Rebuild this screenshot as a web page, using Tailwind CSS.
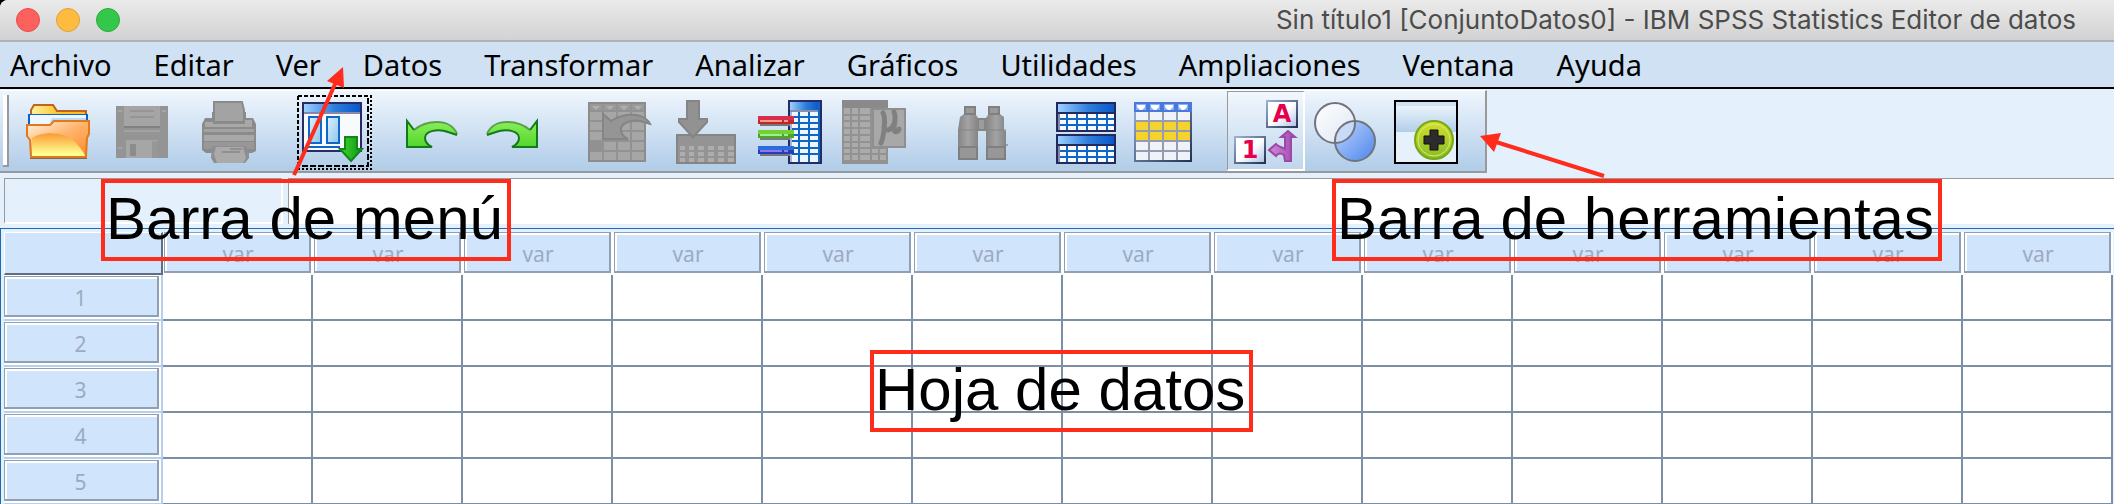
<!DOCTYPE html>
<html lang="es">
<head>
<meta charset="utf-8">
<title>Sin título1 [ConjuntoDatos0] - IBM SPSS Statistics Editor de datos</title>
<script src="https://cdn.jsdelivr.net/npm/@tailwindcss/browser@4"></script>
</head>
<body class="bg-black font-['Noto_Sans',sans-serif]">
<div class="relative flex h-screen flex-col overflow-hidden rounded-tl-lg bg-[#e4f0fc]">

  <header class="flex h-[42px] shrink-0 items-center border-b-2 border-[#b2b2b2] bg-linear-to-b from-[#ebebeb] to-[#d2d2d2] pr-[38px] pl-4">
    <div class="flex gap-4">
      <button aria-label="Cerrar" class="size-6 rounded-full border border-[#e2504c] bg-[#fc615d]"></button>
      <button aria-label="Minimizar" class="size-6 rounded-full border border-[#dfa03a] bg-[#fdbc40]"></button>
      <button aria-label="Ampliar" class="size-6 rounded-full border border-[#2ba93f] bg-[#34c84a]"></button>
    </div>
    <h1 class="ml-auto font-['Inter',sans-serif] text-[26px] leading-8 whitespace-nowrap text-[#4c4c4c]">Sin título1 [ConjuntoDatos0] - IBM SPSS Statistics Editor de datos</h1>
  </header>

  <nav aria-label="Menú" class="flex h-[47px] shrink-0 items-center gap-[42px] border-b-2 border-black bg-[#cfe1f3] pl-[10px] text-[29px] leading-9 text-black">
    <button>Archivo</button>
    <button>Editar</button>
    <button>Ver</button>
    <button>Datos</button>
    <button>Transformar</button>
    <button>Analizar</button>
    <button>Gráficos</button>
    <button>Utilidades</button>
    <button>Ampliaciones</button>
    <button>Ventana</button>
    <button>Ayuda</button>
  </nav>

  <div role="toolbar" aria-label="Barra de herramientas" class="mt-px flex h-[83px] shrink-0 items-center gap-6 self-start border-t border-r-2 border-b-2 border-t-white border-r-[#999] border-b-[#999] bg-linear-to-b from-[#eff6fd] to-[#b0cce8] pr-5 pl-[3px]">
    <div class="-mr-6 h-[72px] w-[6px] border-r-2 border-b-2 border-[#999] bg-white"></div>
    <div class="ml-[10px] flex gap-2">
      <button aria-label="Abrir" class="flex h-[78px] w-[78px] items-center justify-center">
        <svg class="size-[72px] overflow-visible" viewBox="22 95 72 72">
          <defs>
            <linearGradient id="fy" x1="0" y1="0" x2="0" y2="1"><stop offset="0" stop-color="#fb9a34"/><stop offset=".9" stop-color="#ffff90"/></linearGradient>
            <linearGradient id="fb" x1="0" y1="0" x2="1" y2="0"><stop offset="0" stop-color="#fff3a0"/><stop offset=".5" stop-color="#fdc32c"/><stop offset="1" stop-color="#fbb52c"/></linearGradient>
            <linearGradient id="fr" x1="0" y1="0" x2="1" y2="1"><stop offset="0" stop-color="#fff4e4"/><stop offset=".5" stop-color="#ffb36a"/><stop offset="1" stop-color="#fb8a28"/></linearGradient>
          </defs>
          <rect x="30" y="157" width="57" height="2" fill="#7d6a50"/>
          <path d="M31 130V110L34 105H53L57 111H86V130Z" fill="url(#fb)" stroke="#bf6420" stroke-width="2"/>
          <rect x="28" y="114" width="60" height="14" fill="#0a62d0"/>
          <path d="M30 115H86V128H30Z" fill="#eef7fe"/><path d="M52 118H86V122H50Z" fill="#b4dcf8"/>
          <path d="M27 125H50L54 121H89V134L87 138L86 157H31L30 140L27 136Z" fill="url(#fr)" stroke="#e07a1c" stroke-width="2"/>
          <path d="M32 138C42 131 66 131 76 143C80 148 84 152 85 156H32Z" fill="url(#fy)"/>
        </svg>
      </button>
      <button aria-label="Guardar" class="flex h-[78px] w-[78px] items-center justify-center">
        <svg class="size-[72px] overflow-visible" viewBox="108 95 72 72">
          <rect x="116" y="106" width="52" height="52" fill="#949494"/>
          <rect x="124" y="106" width="36" height="20" fill="#a5a5a5"/>
          <path d="M130 111H154M130 117H154" stroke="#959595" stroke-width="2"/>
          <path d="M118 111H122M162 111H166M118 148H122" stroke="#a5a5a5" stroke-width="2"/>
          <path d="M124 127H160" stroke="#828282" stroke-width="2"/><path d="M124 131H160" stroke="#a2a2a2" stroke-width="2"/>
          <rect x="126" y="140" width="32" height="18" fill="#a6a6a6"/><rect x="152" y="141" width="6" height="17" fill="#979797"/>
          <rect x="130" y="144" width="6" height="12" fill="#8c8c8c"/>
        </svg>
      </button>
      <button aria-label="Imprimir" class="flex h-[78px] w-[78px] items-center justify-center">
        <svg class="size-[72px] overflow-visible" viewBox="194 95 72 72">
          <path d="M202 124L205 118H212V112H246V118H253L256 124V151L252 153H206L202 150Z" fill="#8b8b8b"/>
          <path d="M214 102H242L244 110V122H214Z" fill="#a3a3a3" stroke="#8a8a8a" stroke-width="2"/>
          <path d="M205 122H213V124H245V120H252V127H205Z" fill="#a8a8a8"/>
          <rect x="204" y="129" width="50" height="3" fill="#a3a3a3"/>
          <rect x="204" y="135" width="50" height="6" fill="#a8a8a8"/>
          <path d="M204 142H254V149H204Z" fill="#989898"/>
          <path d="M212 146H246L249 153V158L245 163H214L211 158Z" fill="#8e8e8e"/>
          <path d="M216 147H243L246 158L243 163H217L214 154Z" fill="#aaa"/>
          <path d="M230 149H242M222 152H240" stroke="#8f8f8f" stroke-width="2"/>
        </svg>
      </button>
    </div>
    <button aria-label="Recuperar cuadros de diálogo" class="flex h-[78px] w-[78px] items-center justify-center">
      <svg class="size-[72px] overflow-visible" viewBox="296 95 72 72">
        <defs>
          <linearGradient id="tb" x1="0" y1="0" x2="1" y2="0"><stop offset="0" stop-color="#9ccfff"/><stop offset=".55" stop-color="#2d7ddb"/><stop offset="1" stop-color="#0a58c8"/></linearGradient>
          <linearGradient id="pn" x1="0" y1="0" x2="1" y2="1"><stop offset="0" stop-color="#dff1fc"/><stop offset="1" stop-color="#8cc4ec"/></linearGradient>
          <linearGradient id="gr" x1="0" y1="0" x2="1" y2="0"><stop offset="0" stop-color="#3ed62c"/><stop offset="1" stop-color="#12961a"/></linearGradient>
        </defs>
        <g fill="none" stroke="#000" stroke-width="2">
          <path d="M298 96H372M298 96V168" stroke-dasharray="4 2"/>
          <path d="M368 98V166H298" stroke-dasharray="6 2"/>
          <path d="M371 96V169H298" stroke-dasharray="2 2"/>
        </g>
        <rect x="303" y="103" width="58" height="48" fill="#f7fbfd" stroke="#272c66" stroke-width="2"/>
        <rect x="304" y="104" width="56" height="8" fill="url(#tb)"/>
        <path d="M304 113H360" stroke="#8a86a8" stroke-width="2"/>
        <rect x="309" y="117" width="12" height="26" fill="url(#pn)" stroke="#0f66cc" stroke-width="2"/>
        <rect x="327" y="117" width="12" height="26" fill="url(#pn)" stroke="#0f66cc" stroke-width="2"/>
        <path d="M308 147H340" stroke="#0f66cc" stroke-width="2"/>
        <path d="M345 137H357V149H362L351 161L340 149H345Z" fill="url(#gr)" stroke="#12861a" stroke-width="2"/>
      </svg>
    </button>
    <div class="flex gap-[2px]">
      <button aria-label="Deshacer" class="flex h-[78px] w-[78px] items-center justify-center">
        <svg class="size-[72px] overflow-visible" viewBox="398 95 72 72">
          <defs><linearGradient id="un" x1="0" y1="0" x2="0" y2="1"><stop offset="0" stop-color="#8aee5a"/><stop offset="1" stop-color="#52d62e"/></linearGradient></defs>
          <path d="M407 121L414 130C424 122 444 119 452 127L457 134L448 132C438 128 425 131 425 138C425 142 428 145 432 147H407Z" fill="url(#un)"/>
          <path d="M457 134C454 126 446 122 437 122C427 122 420 125 414 130" fill="none" stroke="#5aa04c" stroke-width="2"/>
          <path d="M414 130L407 121V147H432C428 145 425 142 425 138C425 131 438 128 448 132L457 135" fill="none" stroke="#127a1c" stroke-width="2"/>
        </svg>
      </button>
      <button aria-label="Rehacer" class="flex h-[78px] w-[78px] items-center justify-center">
        <svg class="size-[72px] overflow-visible" viewBox="478 95 72 72">
          <path d="M537 121L530 130C520 122 500 119 492 127L487 134L496 132C506 128 519 131 519 138C519 142 516 145 512 147H537Z" fill="url(#un)"/>
          <path d="M487 134C490 126 498 122 507 122C517 122 524 125 530 130" fill="none" stroke="#5aa04c" stroke-width="2"/>
          <path d="M530 130L537 121V147H512C516 145 519 142 519 138C519 131 506 128 496 132L487 135" fill="none" stroke="#127a1c" stroke-width="2"/>
        </svg>
      </button>
    </div>
    <div class="flex gap-2">
      <button aria-label="Ir a caso" class="flex h-[78px] w-[78px] items-center justify-center">
        <svg class="size-[72px] overflow-visible" viewBox="580 95 72 72">
          <rect x="589" y="103" width="56" height="58" fill="#a6a6a6" stroke="#8c8c8c" stroke-width="2"/>
          <path d="M590 104H644V111H590Z" fill="#999"/>
          <path d="M592 106H600L596 110ZM606 106H614L610 110ZM620 106H628L624 110ZM634 106H642L638 110Z" fill="#b0b0b0"/>
          <path d="M603 104V161M617 104V161M631 104V161M590 111H644M590 121H644M590 131H644M590 141H644M590 151H644" stroke="#929292" stroke-width="2"/>
          <path d="M590 142H602V150H590Z" fill="#919191"/>
          <path d="M603 114L611 121C622 114 640 111 649 122L650 124L640 121C630 119 620 124 621 130C621 134 624 137 628 139H603Z" fill="#959595" stroke="#858585" stroke-width="2"/>
        </svg>
      </button>
      <button aria-label="Ir a variable" class="flex h-[78px] w-[78px] items-center justify-center">
        <svg class="size-[72px] overflow-visible" viewBox="666 95 72 72">
          <rect x="677" y="135" width="58" height="28" fill="#949494" stroke="#858585" stroke-width="2"/>
          <path fill="#adadad" d="M680 146H685V150H680ZM689 146H694V150H689ZM698 146H704V150H698ZM708 146H714V150H708ZM718 146H724V150H718ZM728 146H734V150H728ZM680 152H685V156H680ZM689 152H694V156H689ZM698 152H704V156H698ZM708 152H714V156H708ZM718 152H724V156H718ZM728 152H734V156H728ZM680 158H685V162H680ZM689 158H694V162H689ZM698 158H704V162H698ZM708 158H714V162H708ZM718 158H724V162H718ZM728 158H734V162H728Z"/>
          <path d="M687 101H699V119H707V122L695 135L693 137L691 135L679 122V119H687Z" fill="#929292" stroke="#858585" stroke-width="2"/>
        </svg>
      </button>
      <button aria-label="Variables" class="flex h-[78px] w-[78px] items-center justify-center">
        <svg class="size-[72px] overflow-visible" viewBox="752 95 72 72">
          <rect x="789" y="101" width="32" height="62" fill="#eef6fd" stroke="#232c66" stroke-width="2"/>
          <rect x="790" y="102" width="29" height="8" fill="url(#tb)"/>
          <path d="M790 111H818" stroke="#8a90a8" stroke-width="2"/>
          <path d="M791 112V162" stroke="#a8b4d0" stroke-width="2"/>
          <path d="M799 112V162M809 112V162M819 102V162M792 117H818M792 123H818M792 129H818M792 135H818M792 141H818M792 148H818M792 154H818" stroke="#0f66c4" stroke-width="2"/>
          <path d="M760 125H790M760 139H790M760 155H790" stroke="#777" stroke-width="2"/>
          <path d="M758 116H794V124H758Z" fill="#d92c50"/><path d="M758 120H794V124H758Z" fill="#c0262c"/><path d="M760 121H782M784 121H788" stroke="#f0a080" stroke-width="2"/>
          <path d="M758 130H794V138H758Z" fill="#78d030"/><path d="M758 134H794V138H758Z" fill="#48a828"/><path d="M760 135H782M784 135H788" stroke="#98f098" stroke-width="2"/>
          <path d="M758 146H794V154H758Z" fill="#2c6cdc"/><path d="M758 150H794V154H758Z" fill="#2440b8"/><path d="M760 151H782M784 151H788" stroke="#9078e8" stroke-width="2"/>
        </svg>
      </button>
      <button aria-label="Descriptivos" class="flex h-[78px] w-[78px] items-center justify-center">
        <svg class="size-[72px] overflow-visible" viewBox="838 95 72 72">
          <rect x="842" y="100" width="46" height="64" fill="#929292"/><rect x="842" y="100" width="46" height="8" fill="#8a8a8a"/>
          <path fill="#ababab" d="M844 108H850V160H844ZM852 108H858V160H852ZM860 108H870V160H860ZM872 108H878V160H872ZM880 108H886V160H880Z"/>
          <path d="M843 115H887M843 121H887M843 128H887M843 135H887M843 142H887M843 148H887M843 154H887" stroke="#929292" stroke-width="2"/>
          <rect x="873" y="109" width="32" height="38" fill="#a8a8a8" stroke="#8f8f8f" stroke-width="2"/>
          <path d="M883 113C886 117 884 136 881 143M894 112C897 118 893 127 894 130C895 133 898 132 899 129M884 127C886 133 892 129 894 124" fill="none" stroke="#808080" stroke-width="5" stroke-linecap="round"/>
        </svg>
      </button>
    </div>
    <button aria-label="Buscar" class="ml-2 flex h-[78px] w-[78px] items-center justify-center">
      <svg class="size-[72px] overflow-visible" viewBox="948 95 72 72">
        <defs><linearGradient id="bn" x1="0" y1="0" x2="1" y2="0"><stop offset="0" stop-color="#858585"/><stop offset=".5" stop-color="#a3a3a3"/><stop offset="1" stop-color="#858585"/></linearGradient></defs>
        <rect x="976" y="118" width="12" height="13" fill="#858585"/><rect x="979" y="120" width="5" height="9" fill="#9c9c9c"/>
        <path d="M964 106H976V115L978 118V160H958V130L960 117L964 114Z" fill="url(#bn)"/>
        <path d="M988 106H1000V114L1004 117V130L1006 131V160H986V118L988 115Z" fill="url(#bn)"/>
        <path d="M965 107H975V114H965ZM989 107H999V114H989Z" fill="#999" stroke="#808080" stroke-width="2"/>
        <path d="M958 130H978M986 130H1006" stroke="#858585"/>
        <path d="M959 147H977V159H959ZM987 147H1005V159H987Z" fill="#979797" stroke="#7f7f7f" stroke-width="2"/>
        <rect x="1006" y="144" width="2" height="2" fill="#a0a0a0"/>
      </svg>
    </button>
    <div class="flex">
      <button aria-label="Dividir archivo" class="flex h-[78px] w-[78px] items-center justify-center">
        <svg class="size-[72px] overflow-visible" viewBox="1050 95 72 72">
          <g id="half">
            <rect x="1057" y="103" width="58" height="28" fill="#f8fbfe" stroke="#22295c" stroke-width="2"/>
            <rect x="1058" y="104" width="56" height="8" fill="url(#tb)"/>
            <path d="M1058 113H1114" stroke="#22295c" stroke-width="2"/>
            <path d="M1067 114V130M1077 114V130M1087 114V130M1097 114V130M1107 114V130M1060 119H1114M1060 125H1114" stroke="#0f66c4" stroke-width="2"/>
            <path d="M1059 114V130" stroke="#8a86a8" stroke-width="2"/>
          </g>
          <use href="#half" y="32"/>
        </svg>
      </button>
      <button aria-label="Seleccionar casos" class="flex h-[78px] w-[78px] items-center justify-center">
        <svg class="size-[72px] overflow-visible" viewBox="1128 95 72 72">
          <defs><linearGradient id="sc" x1="0" y1="0" x2="1" y2="1"><stop offset="0" stop-color="#9ab0d8"/><stop offset="1" stop-color="#223450"/></linearGradient></defs>
          <rect x="1135" y="103" width="56" height="58" fill="#f0f2fa" stroke="url(#sc)" stroke-width="2"/>
          <rect x="1134" y="102" width="58" height="10" fill="#4a78dc"/>
          <path d="M1136 104H1146V110H1136ZM1150 104H1160V110H1150ZM1164 104H1174V110H1164ZM1178 104H1188V110H1178Z" fill="#8cb0f4"/>
          <path d="M1137 105H1145V107L1142 110H1140L1137 107ZM1151 105H1159V107L1156 110H1154L1151 107ZM1165 105H1173V107L1170 110H1168L1165 107ZM1179 105H1187V107L1184 110H1182L1179 107Z" fill="#fff"/>
          <rect x="1136" y="122" width="54" height="18" fill="#f6d32c"/>
          <path d="M1149 112V160M1163 112V160M1177 112V160M1136 121H1190M1136 131H1190M1136 141H1190M1136 151H1190" stroke="#949cae" stroke-width="2"/>
        </svg>
      </button>
    </div>
    <div class="flex gap-[2px]">
      <button aria-label="Etiquetas de valor" aria-pressed="true" class="-my-px flex h-[80px] w-[78px] items-center justify-center border-t border-r-2 border-b-2 border-l border-t-[#999] border-r-white border-b-white border-l-[#999] bg-white/20">
        <svg class="size-[72px] overflow-visible" viewBox="1230 95 72 72">
          <defs>
            <linearGradient id="bx" x1="0" y1="0" x2="1" y2="1"><stop offset=".5" stop-color="#fff"/><stop offset="1" stop-color="#a8c0e4"/></linearGradient>
            <linearGradient id="pu" x1="0" y1="0" x2="1" y2="0"><stop offset="0" stop-color="#d48adc"/><stop offset="1" stop-color="#a04aac"/></linearGradient>
          </defs>
          <rect x="1267" y="101" width="30" height="26" fill="url(#bx)" stroke="url(#sc)" stroke-width="2"/>
          <rect x="1235" y="137" width="30" height="26" fill="url(#bx)" stroke="url(#sc)" stroke-width="2"/>
          <text x="1282" y="122" text-anchor="middle" font-family="DejaVu Sans" font-weight="700" font-size="24" fill="#e6004c">A</text>
          <text x="1250" y="158" text-anchor="middle" font-family="DejaVu Sans" font-weight="700" font-size="24" fill="#e6004c">1</text>
          <path d="M1288 131L1295 137H1291V161H1285L1284 155C1281 153 1278 153 1276 156L1269 150L1276 144C1278 147 1282 147 1285 149V137H1281Z" fill="url(#pu)" stroke="#9c48a8" stroke-width="2"/>
        </svg>
      </button>
      <button aria-label="Usar conjuntos" class="flex h-[78px] w-[78px] items-center justify-center">
        <svg class="size-[72px] overflow-visible" viewBox="1310 95 72 72">
          <defs>
            <linearGradient id="ca" x1="0" y1="0" x2="1" y2="1"><stop offset="0" stop-color="#fff"/><stop offset="1" stop-color="#dde6f4"/></linearGradient>
            <linearGradient id="cb" x1="0" y1="0" x2="1" y2="1"><stop offset="0" stop-color="#c0d6fc"/><stop offset="1" stop-color="#4c86ec"/></linearGradient>
          </defs>
          <circle cx="1335" cy="123" r="20" fill="url(#ca)"/>
          <circle cx="1355" cy="141" r="20" fill="url(#cb)"/>
          <path d="M1355 121A20 20 0 0 0 1335 143A20 20 0 0 0 1355 121Z" fill="#c8daf8"/>
          <circle cx="1335" cy="123" r="20" fill="none" stroke="#70747c" stroke-width="2"/>
          <circle cx="1355" cy="141" r="20" fill="none" stroke="#70747c" stroke-width="2"/>
        </svg>
      </button>
      <button aria-label="Personalizar barra" class="flex h-[78px] w-[78px] items-center justify-center">
        <svg class="size-[72px] overflow-visible" viewBox="1390 95 72 72">
          <defs>
            <linearGradient id="pb" x1="0" y1="0" x2="0" y2="1"><stop offset="0" stop-color="#eaf3fc"/><stop offset="1" stop-color="#b2cee8"/></linearGradient>
            <linearGradient id="pg" x1="0" y1="0" x2="0" y2="1"><stop offset="0" stop-color="#d4e02c"/><stop offset="1" stop-color="#86bc28"/></linearGradient>
          </defs>
          <rect x="1395" y="101" width="62" height="62" fill="#e6f1fc" stroke="#000" stroke-width="2"/>
          <rect x="1396" y="102" width="60" height="4" fill="#cfe1f3"/>
          <rect x="1396" y="106" width="60" height="26" fill="url(#pb)"/>
          <circle cx="1434" cy="140" r="19" fill="url(#pg)" stroke="#78a818" stroke-width="2"/>
          <circle cx="1434" cy="140" r="16" fill="none" stroke="#dcec70" stroke-width="1"/>
          <path d="M1430 130H1438V136H1444V144H1438V150H1430V144H1424V136H1430Z" fill="#2c2c2c" stroke="#111"/>
        </svg>
      </button>
    </div>
  </div>

  <div class="mt-[5px] mb-1 flex h-[46px] shrink-0 gap-[5px] pl-1">
    <input aria-label="Casilla activa" readonly class="w-[279px] border-t border-r-2 border-b-2 border-l border-t-[#999] border-r-white border-b-white border-l-[#999] bg-[#e4f0fc] px-2 outline-none">
    <input aria-label="Valor de la casilla" class="min-w-0 flex-1 border-t border-l border-[#999] bg-white px-2 outline-none">
  </div>

  <main class="min-h-0 flex-1 overflow-hidden border-t border-l border-[#1a6ab8] pt-[3px] pr-px pl-[3px]">
    <table class="w-full table-fixed border-separate border-spacing-0 bg-white text-[21px] leading-7 text-[#9cabc0]">
      <thead>
        <tr id="head" class="h-[43px]">
          <td class="w-[159px] border-t border-r-2 border-b-2 border-l border-t-white border-r-[#5f6e82] border-b-[#5f6e82] border-l-white bg-[#d0e4fc] p-0"></td>
        </tr>
      </thead>
      <tbody id="body"></tbody>
    </table>
  </main>

  <!-- Callouts -->
  <svg class="pointer-events-none absolute top-0 left-0 h-[504px] w-[2114px]" viewBox="0 0 2114 504" fill="#ff2c1c" stroke="#ff2c1c">
    <path d="M294 175L336 82M1604 176L1496 142" stroke-width="4"/>
    <path d="M343 67L327 81L344 88ZM1480 136L1501 133L1494 152Z" stroke="none"/>
  </svg>
  <p class="absolute top-[179px] left-[101px] border-4 border-[#ff2c1c] pr-[4px] pb-[2px] pl-px font-['Liberation_Sans',sans-serif] text-[60px] leading-[72px] whitespace-nowrap text-black">Barra de menú</p>
  <p class="absolute top-[179px] left-[1332px] border-4 border-[#ff2c1c] pr-[4px] pb-[2px] pl-px font-['Liberation_Sans',sans-serif] text-[60px] leading-[72px] whitespace-nowrap text-black">Barra de herramientas</p>
  <p class="absolute top-[350px] left-[870px] border-4 border-[#ff2c1c] pr-[4px] pb-[2px] pl-px font-['Liberation_Sans',sans-serif] text-[60px] leading-[72px] whitespace-nowrap text-black">Hoja de datos</p>
</div>

<script>
  const columns = 13, rows = 5;
  document.getElementById('head').insertAdjacentHTML('beforeend',
    `<th scope="col" class="p-0 pr-[2px] pb-[2px] pl-px font-normal">
       <div class="h-[41px] border-t border-r-2 border-b-2 border-l border-[#909fb4] bg-white pt-[2px] pl-[2px]">
         <div class="h-full bg-[#d0e4fc] pt-[5px]">var</div>
       </div>
     </th>`.repeat(columns));
  for (let i = 1; i <= rows; i++) {
    document.getElementById('body').insertAdjacentHTML('beforeend',
      `<tr class="h-[46px]">
         <th scope="row" class="border-b-2 border-[#b4d0ec] p-0 font-normal">
           <div class="h-[44px] border-r-2 border-[#b4d0ec] pt-px pr-[2px] pb-[2px]">
             <div class="h-[41px] border-t border-r-2 border-b-2 border-l border-[#909fb4] bg-white pt-[2px] pl-[2px]">
               <div class="h-full bg-[#d0e4fc] pt-[5px] pr-[3px]">${i}</div>
             </div>
           </div>
         </th>` +
      `<td class="border-r-2 border-b-2 border-[#7c8fa3] p-0"></td>`.repeat(columns) + `</tr>`);
  }
</script>
</body>
</html>
